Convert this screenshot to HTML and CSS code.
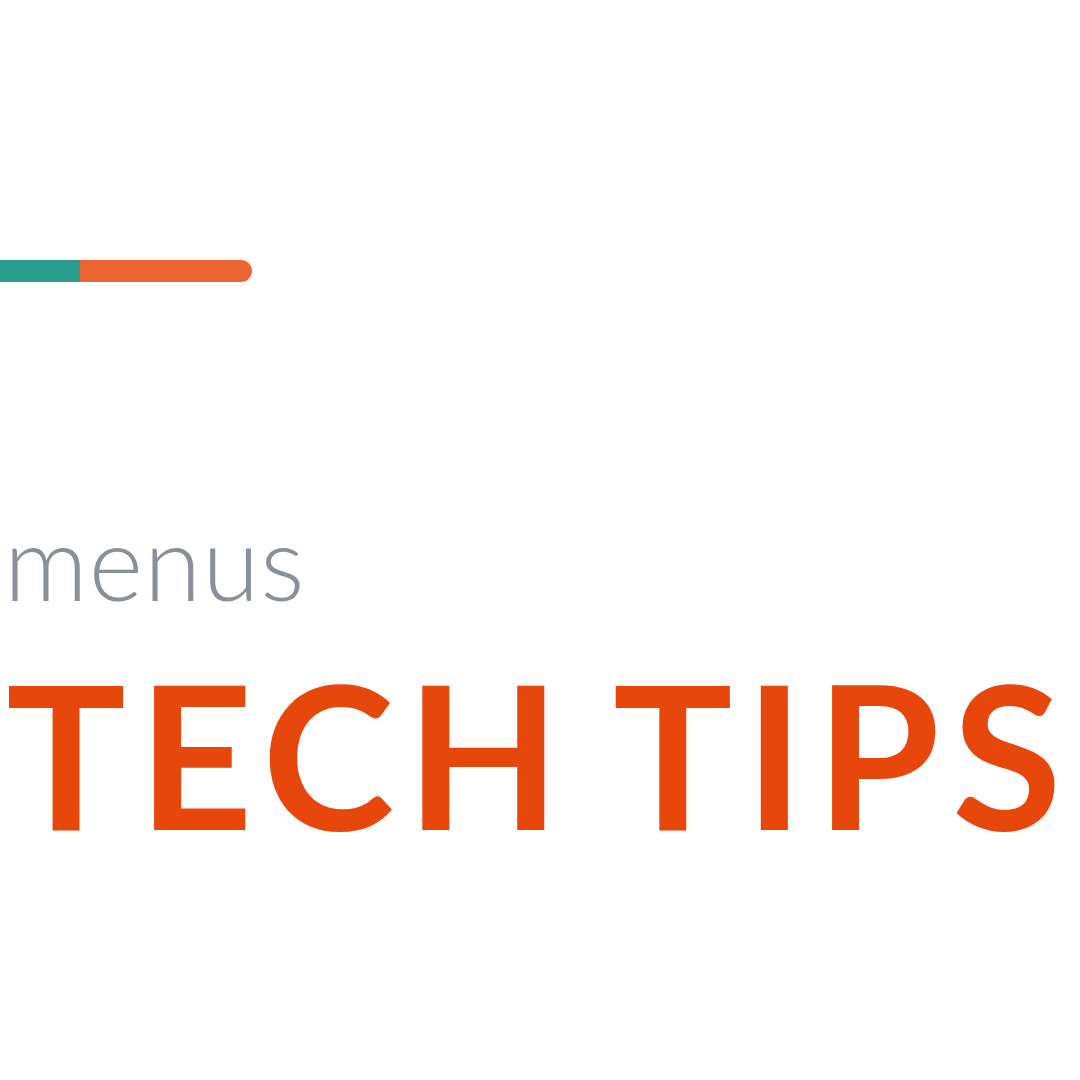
FILE: index.html
```html
<!DOCTYPE html>
<html>
<head>
<meta charset="utf-8">
<link rel="stylesheet" href="styles.css">
</head>
<body>
<div class="page">
  <div class="rule"><span class="rule-teal"></span><span class="rule-orange"></span></div>
  <div class="sub">menus</div>
  <div class="title">TECH TIPS</div>
</div>
</body>
</html>
```
FILE: styles.css
```css
html, body { margin: 0; padding: 0; background: #ffffff; }
.page {
  width: 1080px;
  height: 1080px;
  overflow: hidden;
  display: flex;
  flex-direction: column;
  padding-top: 260px;
  box-sizing: border-box;
}
.rule { display: flex; height: 22px; }
.rule-teal { width: 80px; background: #2a9d8f; }
.rule-orange { width: 172px; background: #ec6432; border-radius: 0 11px 11px 0; }
.sub {
  margin-top: 227px;
  margin-left: 4px;
  font-family: Lato, sans-serif;
  font-weight: 300;
  font-size: 104px;
  line-height: 104px;
  letter-spacing: 1px;
  color: #8a8f9c;
}
.title {
  margin-top: 40px;
  margin-left: 6px;
  font-family: Lato, sans-serif;
  font-weight: 700;
  font-size: 200px;
  line-height: 200px;
  letter-spacing: 12px;
  word-spacing: -14px;
  color: #e8470c;
  white-space: nowrap;
}
```
